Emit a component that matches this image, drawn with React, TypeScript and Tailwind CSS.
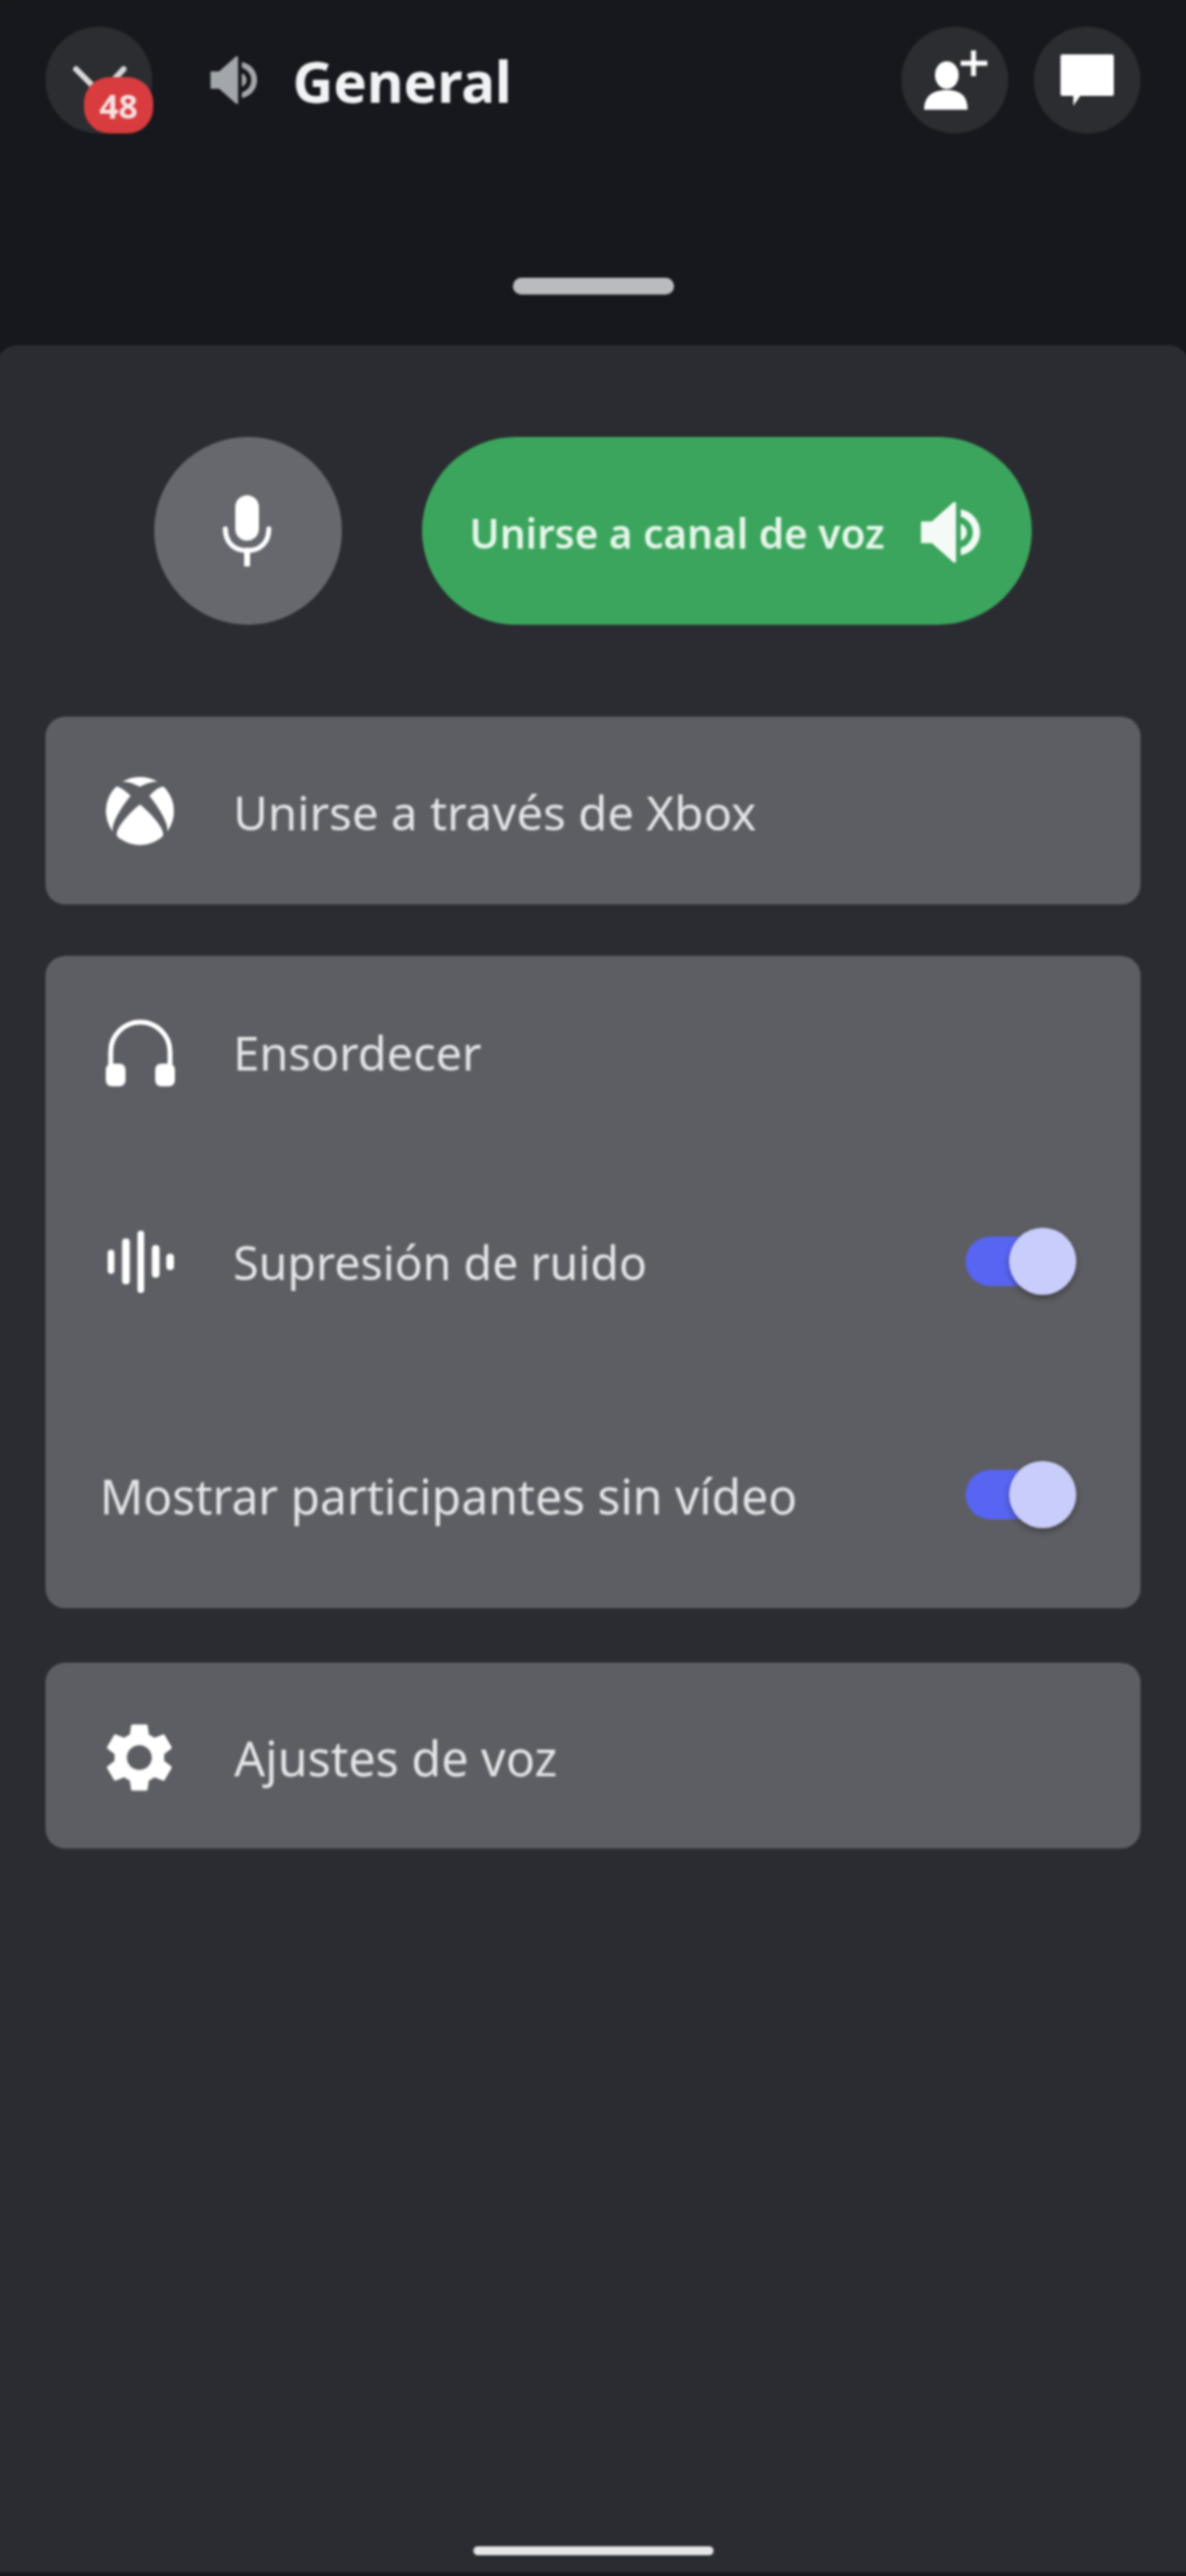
import { FaXbox } from "react-icons/fa";
import { MdSettings } from "react-icons/md";

function Speaker({ className }: { className: string }) {
  return (
    <svg viewBox="0 0 51 50" className={className} fill="currentColor">
      <path d="M0 16h9L27 0h2v50h-2L9 34H0z" />
      <path d="M33 6c10 2 16 10 16 19s-6 17-16 19v-6c6-2 10-7 10-13s-4-11-10-13z" />
      <path d="M33 18c3 1 5 4 5 7s-2 6-5 7z" />
    </svg>
  );
}

function Toggle() {
  return (
    <div className="relative h-[68px] w-[112px]">
      <div className="absolute left-0 top-[9px] h-[50px] w-[90px] rounded-full bg-[#5865f2]" />
      <div className="absolute right-0 top-0 h-[68px] w-[68px] rounded-full bg-[#c9cdfb] shadow-[0_3px_6px_rgba(0,0,0,0.35)]" />
    </div>
  );
}

export default function App() {
  return (
    <div className="h-[2606px] w-[1200px] overflow-hidden bg-[#17181d]">
      <div className="flex h-[2606px] w-[1200px] flex-col bg-[#17181d] pb-[4px] font-['Noto_Sans',sans-serif] blur-[1px]">
        <header className="mt-[27px] flex h-[108px] shrink-0 items-center pl-[46px] pr-[46px]">
          <div className="relative h-[108px] w-[108px] rounded-full bg-[#2c2d31]">
            <svg viewBox="0 0 108 108" className="h-[108px] w-[108px]" fill="none" stroke="#d8d8da" strokeWidth="6" strokeLinecap="round">
              <path d="M31 43l17 17M79 43L67 56" />
            </svg>
            <span className="absolute left-[39px] top-[51px] flex h-[57px] w-[70px] items-center justify-center rounded-[26px] bg-[#d83c3e] text-[34px] font-bold leading-none text-[#f6e3e3]">
              48
            </span>
          </div>
          <Speaker className="ml-[58px] h-[48px] w-[51px] text-[#a3a6aa]" />
          <h1 className="ml-[33px] mt-[2px] text-[57px] font-bold leading-none text-[#f2f3f5]">General</h1>
          <div className="ml-auto flex gap-[26px]">
            <button className="flex h-[108px] w-[108px] items-center justify-center rounded-full bg-[#2c2d31]">
              <svg viewBox="0 0 66 60" className="h-[60px] w-[66px]" fill="#ffffff">
                <ellipse cx="25" cy="25" rx="12" ry="14" />
                <path d="M2 60c0-14 9-20 23-20s21 6 21 20z" />
                <path d="M49.500 0h5v10.500H66v5H54.500V26h-5V15.500H39v-5h10.500z" />
              </svg>
            </button>
            <button className="flex h-[108px] w-[108px] items-center justify-center rounded-full bg-[#2c2d31]">
              <svg viewBox="0 0 54 52" className="h-[52px] w-[54px]" fill="#ffffff">
                <path d="M2 0h50a2 2 0 0 1 2 2v38a2 2 0 0 1-2 2H20l-7 10V42H2a2 2 0 0 1-2-2V2a2 2 0 0 1 2-2z" />
              </svg>
            </button>
          </div>
        </header>

        <div className="mx-auto mt-[146px] h-[17px] w-[163px] shrink-0 rounded-full bg-[#b9bbbe]" />

        <main className="-mx-[4px] mt-[51px] flex flex-1 flex-col rounded-t-[22px] bg-[#2b2c31] px-[50px] pt-[93px]">
          <div className="flex h-[190px] items-center pl-[110px]">
            <button className="flex h-[190px] w-[190px] items-center justify-center rounded-full bg-[#67686d]">
              <svg viewBox="0 0 50 72" className="mr-[3px] h-[72px] w-[50px]" fill="none">
                <rect x="13" y="0" width="24" height="46" rx="12" fill="#ffffff" />
                <path d="M3 34c0 14 9 22 22 22s22-8 22-22" stroke="#ffffff" strokeWidth="5" strokeLinecap="round" />
                <path d="M25 56v15" stroke="#ffffff" strokeWidth="6" strokeLinecap="round" />
              </svg>
            </button>
            <button className="ml-[81px] flex h-[190px] w-[617px] items-center rounded-full bg-[#3ba55d] pl-[48px]">
              <span className="mt-[4px] whitespace-nowrap text-[41px] font-semibold leading-none text-[#e6f6ea]">Unirse a canal de voz</span>
              <Speaker className="ml-[35px] mt-[2px] h-[61px] w-[66px] text-[#f4fbf6]" />
            </button>
          </div>

          <section className="mt-[93px] flex h-[190px] items-center rounded-[20px] bg-[#5d5e63] pl-[60px]">
            <FaXbox className="h-[71px] w-[71px] text-white" />
            <span className="ml-[59px] mt-[4px] text-[48px] leading-none text-[#e3e4e6]">Unirse a través de Xbox</span>
          </section>

          <section className="mt-[52px] flex h-[660px] flex-col rounded-[20px] bg-[#5d5e63] pl-[61px] pr-[65px] pt-[57px]">
            <div className="flex h-[80px] items-center">
              <svg viewBox="0 0 70 70" className="h-[70px] w-[70px]" fill="none">
                <path d="M5 48V35a30 30 0 0 1 60 0v13" stroke="#ffffff" strokeWidth="5" />
                <rect x="0" y="47" width="20" height="23" rx="6" fill="#ffffff" />
                <rect x="50" y="47" width="20" height="23" rx="6" fill="#ffffff" />
              </svg>
              <span className="ml-[59px] mt-[2px] text-[47.500px] leading-none text-[#e3e4e6]">Ensordecer</span>
            </div>
            <div className="mt-[132px] flex h-[80px] items-center">
              <svg viewBox="0 0 72 65" className="h-[65px] w-[70px]" fill="#ffffff">
                <rect x="2" y="20" width="7" height="25" rx="3.5" />
                <rect x="17" y="8" width="8" height="48" rx="4" />
                <rect x="33" y="0" width="7" height="65" rx="3.5" />
                <rect x="48" y="15" width="8" height="34" rx="4" />
                <rect x="63" y="24" width="8" height="17" rx="4" />
              </svg>
              <span className="ml-[59px] mt-[2px] text-[47px] leading-none text-[#e3e4e6]">Supresión de ruido</span>
              <div className="ml-auto"><Toggle /></div>
            </div>
            <div className="mt-[156px] flex h-[80px] items-center">
              <span className="-ml-[6px] mt-[2px] whitespace-nowrap text-[48.500px] leading-none text-[#e3e4e6]">Mostrar participantes sin vídeo</span>
              <div className="ml-auto"><Toggle /></div>
            </div>
          </section>

          <section className="mt-[55px] flex h-[188px] items-center rounded-[20px] bg-[#5d5e63] pl-[53px]">
            <MdSettings className="mt-[3px] h-[84px] w-[84px] text-white" />
            <span className="ml-[54px] mt-[4px] text-[49px] leading-none text-[#e3e4e6]">Ajustes de voz</span>
          </section>

          <div className="mx-auto mb-[17px] mt-auto h-[9px] w-[243px] rounded-full bg-[#e6e6e8]" />
        </main>
      </div>
    </div>
  );
}
